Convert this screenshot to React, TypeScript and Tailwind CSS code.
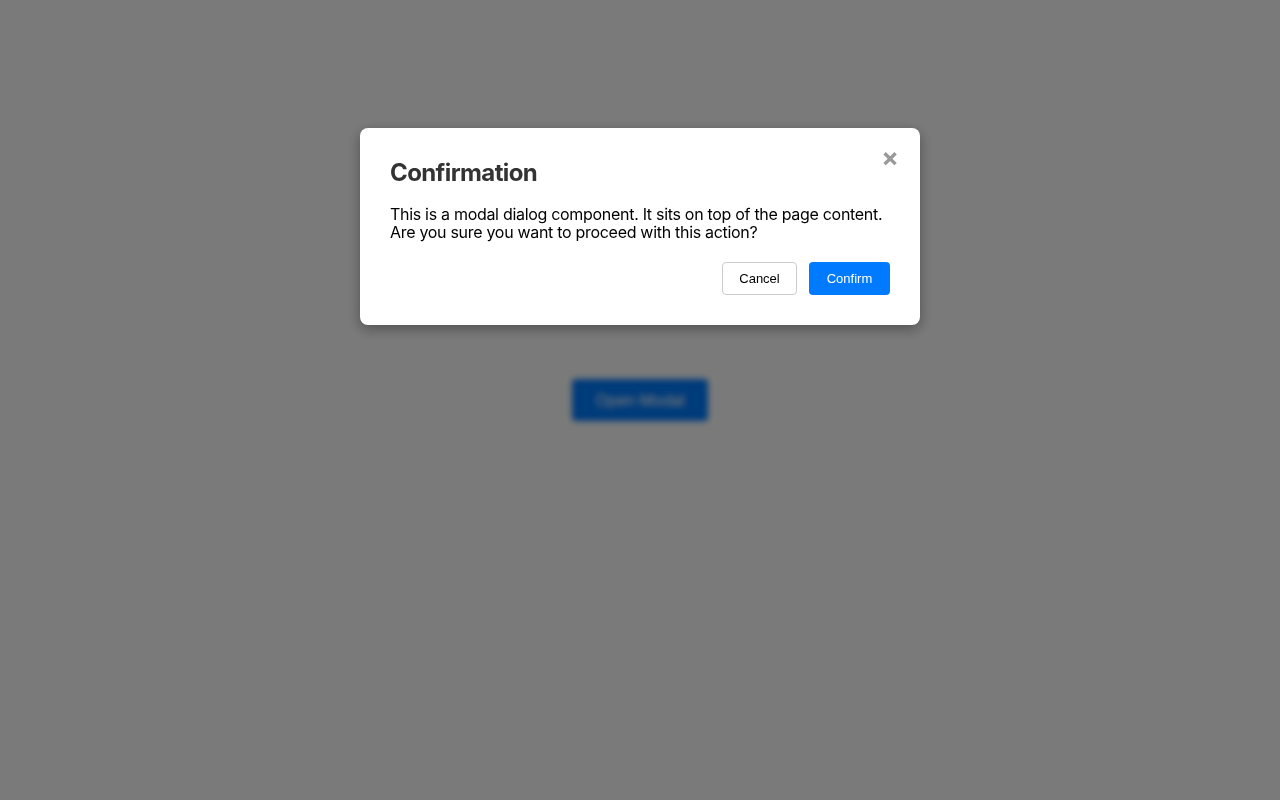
import { useState } from 'react';

export default function App() {
  const [open, setOpen] = useState(true);

  return (
    <div className="relative min-h-screen bg-white" style={{ fontFamily: 'Inter, "Noto Sans", sans-serif' }}>
      <div className="flex min-h-screen items-center justify-center">
        <button
          onClick={() => setOpen(true)}
          className="h-[42px] w-[136px] rounded-[4px] bg-[#007bff] text-base tracking-[-0.3px] text-white"
        >
          Open Modal
        </button>
      </div>

      {open && (
        <div className="fixed inset-0 z-50 flex items-start justify-center bg-black/[0.52] pt-[128px] backdrop-blur-[3px]">
          <div className="relative w-[560px] rounded-lg bg-white p-[30px] shadow-[0_4px_14px_rgba(0,0,0,0.35)]">
            <button
              onClick={() => setOpen(false)}
              className="absolute right-[21px] top-[17px] text-[26px] font-bold leading-none text-[#999]"
            >
              ×
            </button>
            <h2 className="mb-[18px] text-[24px] font-bold leading-[29px] tracking-[-0.6px] text-[#333]">Confirmation</h2>
            <p className="text-base leading-[18px] tracking-[-0.3px] text-black">
              This is a modal dialog component. It sits on top of the page content. Are you sure you want to proceed with this action?
            </p>
            <div className="mt-[21px] flex justify-end gap-3" style={{ fontFamily: '"Liberation Sans", Arial, sans-serif' }}>
              <button
                onClick={() => setOpen(false)}
                className="h-[33px] w-[75px] rounded-[4px] border border-[#ccc] bg-white text-[13px] text-black"
              >
                Cancel
              </button>
              <button
                onClick={() => setOpen(false)}
                className="h-[33px] w-[81px] rounded-[4px] bg-[#007bff] text-[13px] text-white"
              >
                Confirm
              </button>
            </div>
          </div>
        </div>
      )}
    </div>
  );
}
